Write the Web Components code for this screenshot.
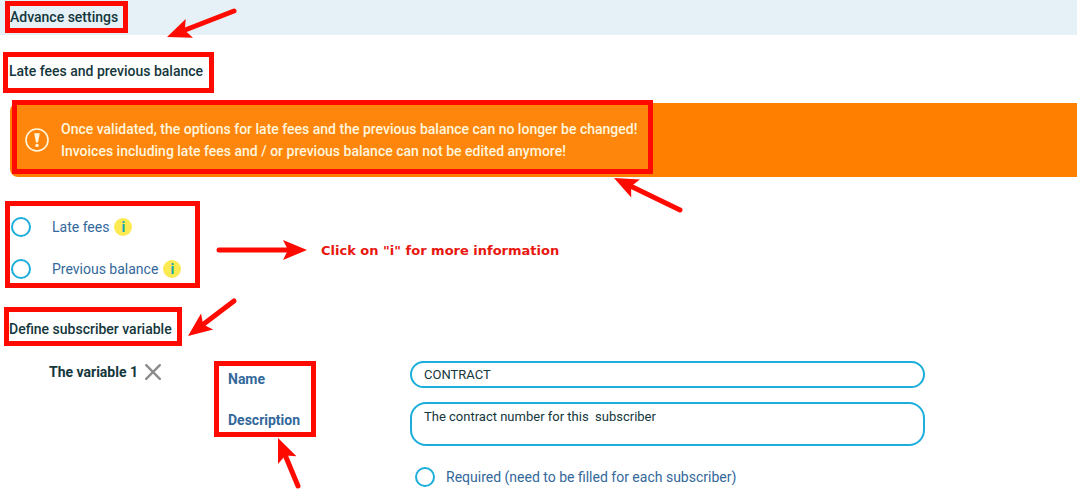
<!DOCTYPE html>
<html lang="en">
<head>
<meta charset="utf-8">
<title>Advance settings</title>
<style>
  html {
    --ink: #14373c;
    --label: #33689b;
    --accent: #1caedb;
    --mark: #ff0a00;
  }

  body {
    margin: 0;
    background: #fff;
    color: var(--ink);
    font: 14px/22px Roboto, sans-serif;
  }
</style>
</head>
<body>
<settings-page>
  <page-header>Advance settings</page-header>
  <section-title>Late fees and previous balance</section-title>
  <warning-banner>
    Once validated, the options for late fees and the previous balance can no longer be changed!<br>
    Invoices including late fees and / or previous balance can not be edited anymore!
  </warning-banner>
  <option-list>
    <round-option info>Late fees</round-option>
    <round-option info>Previous balance</round-option>
  </option-list>
  <section-title>Define subscriber variable</section-title>
  <variable-editor name="CONTRACT" description="The contract number for this  subscriber">The variable 1</variable-editor>

  <mark-box slot="marks" box="5 1 123 32"></mark-box>
  <mark-box slot="marks" box="3 52 211 41"></mark-box>
  <mark-box slot="marks" box="12 100 641 74" tint></mark-box>
  <mark-box slot="marks" box="5 201 195 87"></mark-box>
  <mark-box slot="marks" box="4 307 178 39"></mark-box>
  <mark-box slot="marks" box="214 361 102 76"></mark-box>
  <mark-arrow slot="marks" from="234 11" to="167 37"></mark-arrow>
  <mark-arrow slot="marks" from="680 210" to="614 178"></mark-arrow>
  <mark-arrow slot="marks" from="219 250" to="307 250"></mark-arrow>
  <mark-arrow slot="marks" from="234 301" to="188 336"></mark-arrow>
  <mark-arrow slot="marks" from="298 486" to="278 438"></mark-arrow>
  <mark-note slot="marks" at="321 241">Click on "i" for more information</mark-note>
</settings-page>

<script>
  class BaseElement extends HTMLElement {
    render(html) {
      this.attachShadow({ mode: 'open' });
      this.shadowRoot.innerHTML = html;
    }
  }

  customElements.define('settings-page', class extends BaseElement {
    constructor() {
      super();
      this.render(`
        <style>
          :host { display: block; position: relative; }
          main { display: flex; flex-direction: column; padding-bottom: 11px; }
        </style>
        <main><slot></slot></main>
        <slot name="marks"></slot>
      `);
    }
  });

  customElements.define('page-header', class extends BaseElement {
    constructor() {
      super();
      this.render(`
        <style>
          :host { display: block; padding: 6px 10px 7px; background: #e6f1f7; }
          h1 { margin: 0; font: inherit; font-weight: 500; }
        </style>
        <h1><slot></slot></h1>
      `);
    }
  });

  customElements.define('section-title', class extends BaseElement {
    constructor() {
      super();
      this.render(`
        <style>
          :host { display: block; padding: 25px 9px 21px; }
          h2 { margin: 0; font: inherit; font-weight: 500; }
        </style>
        <h2><slot></slot></h2>
      `);
    }
  });

  customElements.define('warning-banner', class extends BaseElement {
    constructor() {
      super();
      this.render(`
        <style>
          :host {
            display: flex;
            align-items: center;
            gap: 12px;
            margin-left: 10px;
            padding: 15px;
            border-radius: 8px 0 0 8px;
            background: #ff8000;
            color: #fff6dc;
          }
          svg { flex: none; width: 24px; height: 24px; }
          p { margin: 0; font-weight: 500; }
        </style>
        <svg viewBox="0 0 24 24" aria-hidden="true">
          <circle cx="12" cy="12" r="11" fill="none" stroke="currentColor" stroke-width="1.6"/>
          <path d="M9.2 5.2h5.6L13 14.4h-2z" fill="currentColor"/>
          <circle cx="12" cy="17.4" r="1.7" fill="currentColor"/>
        </svg>
        <p><slot></slot></p>
      `);
    }
  });

  customElements.define('option-list', class extends BaseElement {
    constructor() {
      super();
      this.render(`
        <style>
          :host { display: flex; flex-direction: column; gap: 20px; padding: 39px 11px 13px; }
        </style>
        <slot></slot>
      `);
    }
  });

  customElements.define('round-option', class extends BaseElement {
    constructor() {
      super();
      this.render(`
        <style>
          :host { display: flex; align-items: center; gap: 5px; color: var(--label); }
          label { display: flex; align-items: center; gap: var(--option-gap, 21px); }
          input {
            appearance: none;
            flex: none;
            width: 20px;
            height: 20px;
            margin: 0;
            border: 2px solid var(--accent);
            border-radius: 50%;
            background: #fff;
          }
          input:checked { background: var(--accent); box-shadow: inset 0 0 0 3px #fff; }
          button {
            width: 18px;
            height: 18px;
            padding: 0;
            border: 0;
            border-radius: 50%;
            background: #fdea52;
            color: #12a5ae;
            font: bold 14px/18px Roboto, sans-serif;
          }
          :host(:not([info])) button { display: none; }
        </style>
        <label><input type="checkbox"><span><slot></slot></span></label>
        <button type="button">i</button>
      `);
    }
  });

  customElements.define('variable-editor', class extends BaseElement {
    constructor() {
      super();
      this.render(`
        <style>
          :host {
            display: grid;
            grid-template-columns: 179px 182px minmax(0, 1fr);
            align-items: start;
            row-gap: 14px;
            margin: 0 152px 0 49px;
          }
          .title { display: flex; align-items: center; gap: 7px; height: 22px; font-weight: bold; }
          .title button { display: flex; padding: 0; border: 0; background: none; }
          .title svg { width: 16px; height: 16px; }
          .field { padding-top: 9px; color: var(--label); font-weight: bold; line-height: 18px; }
          input, textarea {
            box-sizing: border-box;
            display: block;
            width: 100%;
            margin: 0;
            padding: 0 12px;
            border: 2px solid var(--accent);
            border-radius: 14px;
            background: #fff;
            color: var(--ink);
            font: 13px/18px Roboto, sans-serif;
          }
          input { height: 27px; }
          textarea { height: 44px; padding: 4px 12px; border-radius: 16px; resize: none; overflow: hidden; }
          round-option { grid-column: 3; padding: 6px 5px 0; --option-gap: 11px; }
        </style>
        <div class="title">
          <span><slot></slot></span>
          <button type="button" aria-label="Remove variable">
            <svg viewBox="0 0 16 16" fill="none" stroke="#8d8d8d" stroke-width="2.4" stroke-linecap="round">
              <path d="M1.2 1.2l13.6 13.6M14.8 1.2L1.2 14.8"/>
            </svg>
          </button>
        </div>
        <label class="field" for="name">Name</label>
        <input id="name" type="text">
        <span></span>
        <label class="field" for="description">Description</label>
        <textarea id="description"></textarea>
        <round-option>Required (need to be filled for each subscriber)</round-option>
      `);
    }

    connectedCallback() {
      this.shadowRoot.querySelector('input').value = this.getAttribute('name');
      this.shadowRoot.querySelector('textarea').value = this.getAttribute('description');
    }
  });

  // Tutorial marks, drawn over the page
  customElements.define('mark-box', class extends BaseElement {
    constructor() {
      super();
      this.render(`
        <style>
          :host {
            position: absolute;
            box-sizing: border-box;
            border: 5px solid var(--mark);
            pointer-events: none;
          }
          :host([tint]) { background: rgba(255, 255, 255, .05); }
        </style>
      `);
    }

    connectedCallback() {
      const [x, y, w, h] = this.getAttribute('box').split(' ');
      Object.assign(this.style, { left: `${x}px`, top: `${y}px`, width: `${w}px`, height: `${h}px` });
    }
  });

  customElements.define('mark-arrow', class extends BaseElement {
    constructor() {
      super();
      this.render(`
        <style>
          :host { position: absolute; pointer-events: none; }
          svg { display: block; width: 1px; height: 1px; overflow: visible; }
        </style>
        <svg aria-hidden="true">
          <g fill="#ff0a00" stroke="#ff0a00">
            <line x2="-16" stroke-width="5" stroke-linecap="round"/>
            <path d="M0 0L-24 -10L-19 0L-24 10Z" stroke="none"/>
          </g>
        </svg>
      `);
    }

    connectedCallback() {
      const [x1, y1] = this.getAttribute('from').split(' ').map(Number);
      const [x2, y2] = this.getAttribute('to').split(' ').map(Number);
      const angle = Math.atan2(y2 - y1, x2 - x1) * 180 / Math.PI;
      const line = this.shadowRoot.querySelector('line');

      this.style.left = `${x2}px`;
      this.style.top = `${y2}px`;
      line.setAttribute('x1', -Math.hypot(x2 - x1, y2 - y1));
      this.shadowRoot.querySelector('g').setAttribute('transform', `rotate(${angle})`);
    }
  });

  customElements.define('mark-note', class extends BaseElement {
    constructor() {
      super();
      this.render(`
        <style>
          :host {
            position: absolute;
            color: #e8170f;
            font: bold 13px/20px "DejaVu Sans", sans-serif;
            white-space: nowrap;
          }
        </style>
        <slot></slot>
      `);
    }

    connectedCallback() {
      const [x, y] = this.getAttribute('at').split(' ');
      this.style.left = `${x}px`;
      this.style.top = `${y}px`;
    }
  });
</script>
</body>
</html>
